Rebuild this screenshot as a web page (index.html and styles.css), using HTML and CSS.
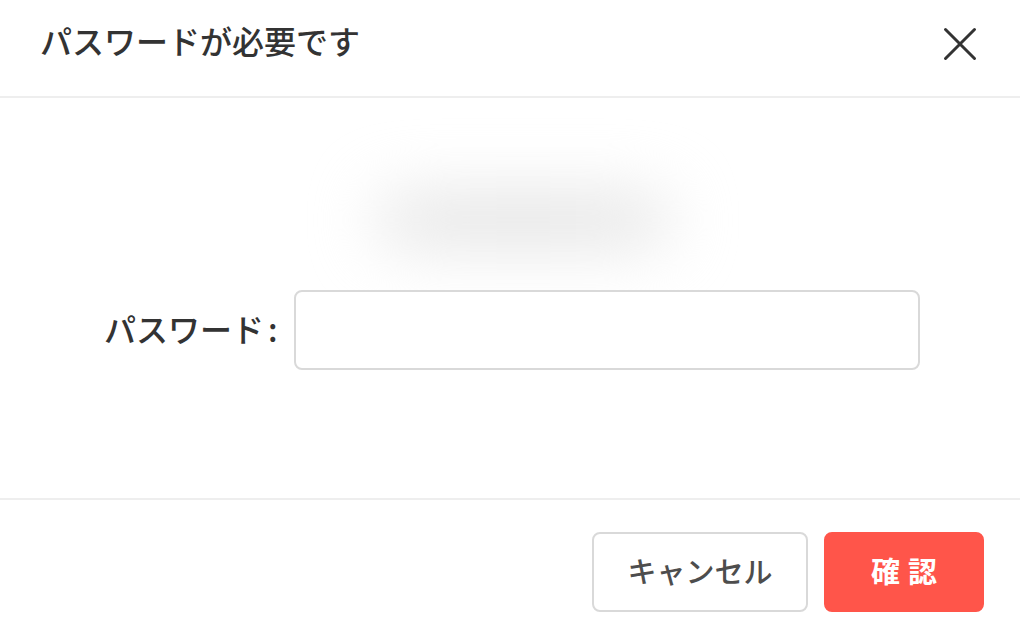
FILE: index.html
```html
<!DOCTYPE html>
<html lang="ja">
<head>
  <meta charset="UTF-8" />
  <meta name="viewport" content="width=device-width, initial-scale=1.0"/>
  <title>パスワードが必要です</title>
  <link rel="stylesheet" href="styles.css">
</head>
<body>
  <form class="dialog">
    <header class="dialog-header">
      <h1>パスワードが必要です</h1>
      <button type="button" class="close" aria-label="閉じる">
        <svg width="36" height="36" viewBox="0 0 36 36" fill="none" stroke="#333" stroke-width="3" stroke-linecap="round">
          <path d="M3.5 3.5 32.5 32.5M32.5 3.5 3.5 32.5"/>
        </svg>
      </button>
    </header>

    <div class="dialog-body">
      <!-- hidden account name -->
      <div class="smudge"></div>
      <div class="field">
        <label for="password">パスワード<span class="colon">:</span></label>
        <input id="password" type="password" />
      </div>
    </div>

    <footer class="dialog-footer">
      <button type="button" class="btn cancel">キャンセル</button>
      <button type="submit" class="btn primary">確 認</button>
    </footer>
  </form>
</body>
</html>
```
FILE: styles.css
```css
* {
  box-sizing: border-box;
}

body {
  margin: 0;
  font-family: "Noto Sans CJK JP", sans-serif;
  font-weight: 500;
  color: #333;
  background-color: #fff;
}

.dialog {
  display: flex;
  flex-direction: column;
  min-height: 100vh;
}

.dialog-header {
  display: flex;
  justify-content: space-between;
  align-items: flex-start;
  padding: 16px 40px 32px;
  border-bottom: 2px solid #eee;
}

h1 {
  margin: 0;
  font-size: 32px;
  font-weight: 500;
  line-height: 48px;
}

.close {
  display: flex;
  padding: 10px 2px 2px;
  border: none;
  background: none;
  cursor: pointer;
}

.dialog-body {
  flex: 1;
  padding: 92px 100px 0 104px;
}

.smudge {
  width: 300px;
  height: 60px;
  margin: 0 0 40px 33%;
  border-radius: 30px;
  background: linear-gradient(to right, #ececec, #e5e5e5, #ececec);
  filter: blur(30px);
}

.field {
  display: flex;
  align-items: center;
  position: relative;
}

label {
  padding-bottom: 4px;
  font-size: 32px;
  line-height: 48px;
  white-space: nowrap;
}

.colon {
  margin: 0 16px 0 4px;
}

input {
  flex: 1;
  min-width: 0;
  height: 80px;
  padding: 0 20px;
  font-size: 32px;
  border: 2px solid #d9d9d9;
  border-radius: 8px;
  background-color: #fff;
}

.dialog-footer {
  display: flex;
  justify-content: flex-end;
  gap: 16px;
  padding: 32px 36px 18px;
  border-top: 2px solid #eee;
}

.btn {
  min-width: 160px;
  height: 80px;
  padding: 0 32px 4px;
  font-family: "Liberation Sans", "Noto Sans CJK JP", sans-serif;
  font-size: 29px;
  font-weight: 500;
  color: #4d4d4d;
  border: 2px solid #d9d9d9;
  border-radius: 8px;
  background-color: #fff;
  cursor: pointer;
}

.cancel {
  min-width: 216px;
}

.primary {
  font-weight: 700;
  color: #fff;
  border-color: #ff554a;
  background-color: #ff554a;
}
```
